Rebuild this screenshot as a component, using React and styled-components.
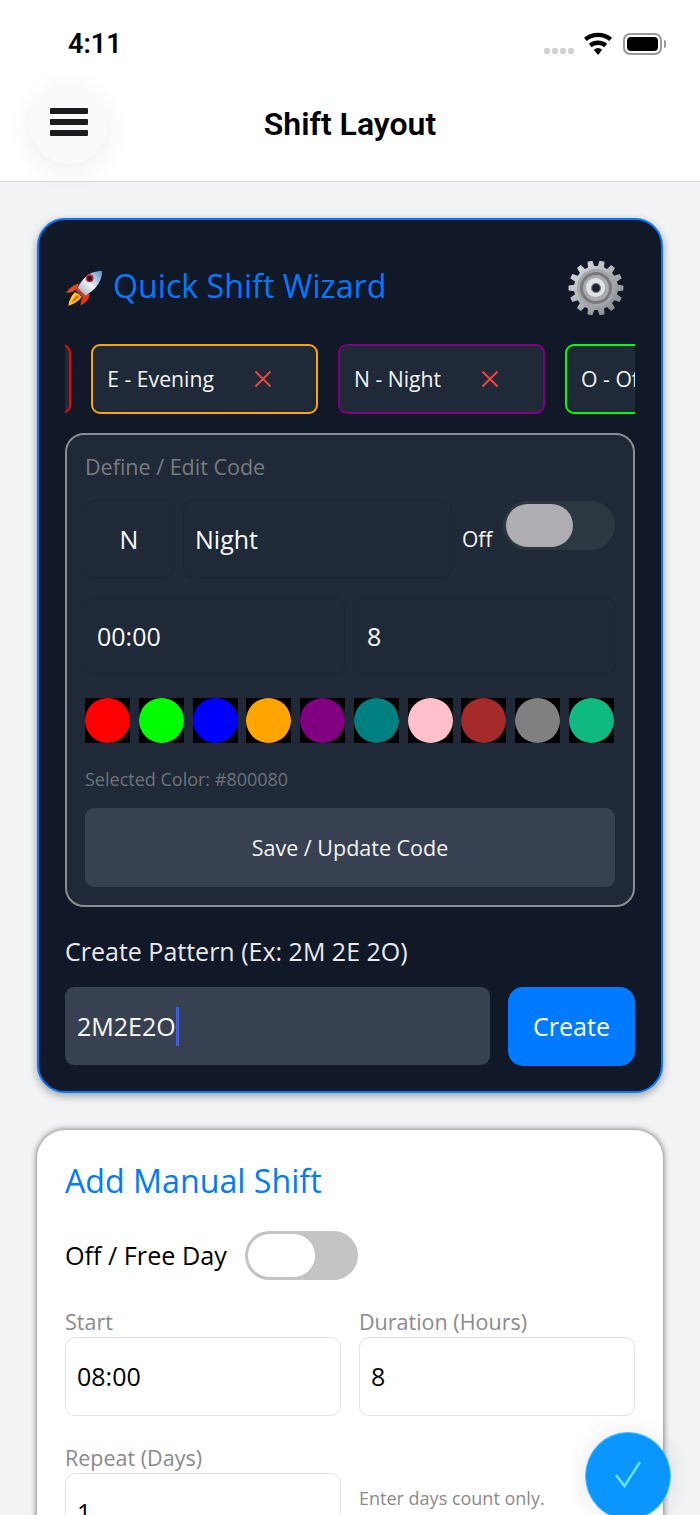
import { useLayoutEffect, useRef } from "react";
import styled, { createGlobalStyle } from "styled-components";

const chips = [
  { id: "M", name: "Morning", color: "#ff0000" },
  { id: "E", name: "Evening", color: "#ffa500" },
  { id: "N", name: "Night", color: "#800080" },
  { id: "O", name: "Off", color: "#00ff00" },
];

const swatches = [
  "#ff0000",
  "#00ff00",
  "#0000ff",
  "#ffa500",
  "#800080",
  "#008080",
  "#ffc0cb",
  "#a52a2a",
  "#808080",
  "#10b981",
];

// 14 teeth around the centre, outline is easier to compute than to write out
function gearPath() {
  const teeth = 14;
  const points = [];
  for (let i = 0; i < teeth; i++) {
    const a = (i / teeth) * Math.PI * 2;
    const step = (Math.PI * 2) / teeth;
    [
      [-0.33, 22],
      [-0.2, 27.5],
      [0.2, 27.5],
      [0.33, 22],
    ].forEach(([offset, r]) => {
      const t = a + offset * step;
      points.push(`${(r * Math.cos(t)).toFixed(2)} ${(r * Math.sin(t)).toFixed(2)}`);
    });
  }
  return "M" + points.join("L") + "Z";
}

export default function App() {
  const chipsRef = useRef(null);

  useLayoutEffect(() => {
    const row = chipsRef.current;
    const second = row.children[1];
    row.scrollLeft = second.offsetLeft - row.offsetLeft - 26;
  }, []);

  return (
    <Page>
      <GlobalStyle />
      <TopArea>
        <StatusBar>
          <Clock>4:11</Clock>
          <StatusIcons>
            <SignalDots>
              <i />
              <i />
              <i />
              <i />
            </SignalDots>
            <svg width="30" height="24" viewBox="0 0 30 24">
              <path
                d="M15 23l-4.2-5.2a6.6 6.6 0 0 1 8.4 0zM8.6 15.2 5.9 11.8a14.4 14.4 0 0 1 18.2 0l-2.7 3.4a10 10 0 0 0-12.8 0zM3.7 9.1 1 5.7a22 22 0 0 1 28 0l-2.7 3.4a17.8 17.8 0 0 0-22.6 0z"
                fill="#000"
              />
            </svg>
            <Battery>
              <BatteryFill />
            </Battery>
          </StatusIcons>
        </StatusBar>
        <NavBar>
          <MenuButton>
            <MenuLine />
            <MenuLine />
            <MenuLine />
          </MenuButton>
          <NavTitle>Shift Layout</NavTitle>
        </NavBar>
      </TopArea>

      <Content>
        <WizardCard>
          <WizardHeader>
            <WizardTitle>
              <svg width="38" height="38" viewBox="30 24 114 114">
                <defs>
                  <linearGradient id="hull" x1="0" x2="1" y1="1" y2="0">
                    <stop offset="0" stopColor="#8b98a8" />
                    <stop offset="0.5" stopColor="#eef2f6" />
                    <stop offset="1" stopColor="#5d8fc4" />
                  </linearGradient>
                </defs>
                <path d="M72 68C58 70 42 80 33 96L52 93 66 84Z" fill="#e8451f" />
                <path d="M104 98C104 112 92 126 76 133L80 113 90 102Z" fill="#e8321f" />
                <path d="M60 94C48 104 42 120 40 134 54 130 70 122 80 108L70 98Z" fill="#ffc81f" />
                <path d="M64 102C56 110 52 118 50 125 58 121 68 114 74 106Z" fill="#f2701f" />
                <path d="M141 30C120 30 100 36 85 55 76 66 68 78 64 90L84 108C96 102 108 94 120 82 134 66 142 48 141 30Z" fill="url(#hull)" />
                <path d="M64 90 68 80 92 104 84 108Z" fill="#c33a28" />
                <circle cx="104" cy="52" r="10" fill="#1a1d2c" stroke="#d7263d" strokeWidth="4" />
              </svg>
              <TitleText>Quick Shift Wizard</TitleText>
            </WizardTitle>
            <svg width="56" height="56" viewBox="-28 -28 56 56" style={{ marginRight: 11 }}>
              <defs>
                <linearGradient id="gear" x1="0" x2="1" y1="0" y2="1">
                  <stop offset="0" stopColor="#dfe3e7" />
                  <stop offset="1" stopColor="#7f8184" />
                </linearGradient>
              </defs>
              <path d={gearPath()} fill="url(#gear)" />
              <circle r="19" fill="#a4a6a9" />
              <circle r="16" fill="#77797c" />
              <circle r="13" fill="#a9abae" />
              <circle r="9.5" cx="-0.5" cy="-0.5" fill="#e0e3e6" />
              <circle r="4.5" fill="#1d2230" stroke="#7b7e82" strokeWidth="1.2" />
            </svg>
          </WizardHeader>

          <ChipRow ref={chipsRef}>
            {chips.map((chip) => (
              <Chip key={chip.id} $color={chip.color}>
                <ChipText>
                  {chip.id} - {chip.name}
                </ChipText>
                <svg width="18" height="18" viewBox="0 0 18 18">
                  <path d="M1.5 1.5 16.5 16.5M16.5 1.5 1.5 16.5" stroke="#ef4444" strokeWidth="2" />
                </svg>
              </Chip>
            ))}
          </ChipRow>

          <CodePanel>
            <PanelLabel>Define / Edit Code</PanelLabel>
            <CodeRow>
              <DarkField $width="88px" $center>
                N
              </DarkField>
              <DarkField $width="269px">Night</DarkField>
              <OffGroup>
                <OffLabel>Off</OffLabel>
                <DarkToggle>
                  <DarkThumb />
                </DarkToggle>
              </OffGroup>
            </CodeRow>
            <TimeRow>
              <DarkField>00:00</DarkField>
              <DarkField>8</DarkField>
            </TimeRow>
            <SwatchRow>
              {swatches.map((color) => (
                <Swatch key={color}>
                  <SwatchDot $color={color} />
                </Swatch>
              ))}
            </SwatchRow>
            <SelectedColor>Selected Color: #800080</SelectedColor>
            <SaveButton>Save / Update Code</SaveButton>
          </CodePanel>

          <PatternLabel>Create Pattern (Ex: 2M 2E 2O)</PatternLabel>
          <PatternRow>
            <PatternInput>
              2M2E2O
              <Caret />
            </PatternInput>
            <CreateButton>Create</CreateButton>
          </PatternRow>
        </WizardCard>

        <ManualCard>
          <ManualTitle>Add Manual Shift</ManualTitle>
          <FreeDayRow>
            <FreeDayLabel>Off / Free Day</FreeDayLabel>
            <LightToggle>
              <LightThumb />
            </LightToggle>
          </FreeDayRow>
          <FieldGrid>
            <div>
              <FieldLabel>Start</FieldLabel>
              <LightField>08:00</LightField>
            </div>
            <div>
              <FieldLabel>Duration (Hours)</FieldLabel>
              <LightField>8</LightField>
            </div>
            <div>
              <FieldLabel>Repeat (Days)</FieldLabel>
              <LightField>1</LightField>
            </div>
            <HintCell>Enter days count only.</HintCell>
          </FieldGrid>
        </ManualCard>
      </Content>

      <Fab>
        <svg width="28" height="28" viewBox="0 0 28 28">
          <path d="M2 15 10.5 26 26 2" fill="none" stroke="#66e0ff" strokeWidth="2.6" />
        </svg>
      </Fab>
    </Page>
  );
}

const GlobalStyle = createGlobalStyle`
  * {
    box-sizing: border-box;
  }
  html, body {
    margin: 0;
    padding: 0;
    background: #f2f3f5;
  }
`;

const Page = styled.div`
  position: relative;
  width: 700px;
  height: 1515px;
  overflow: hidden;
  background: #f2f3f5;
  font-family: "Open Sans", "Liberation Sans", sans-serif;
`;

const TopArea = styled.header`
  height: 182px;
  background: #fff;
  border-bottom: 1px solid #d9d9d9;
`;

const StatusBar = styled.div`
  height: 84px;
  padding: 4px 38px 0 68px;
  display: flex;
  align-items: center;
  justify-content: space-between;
`;

const Clock = styled.div`
  font-family: Roboto, "Liberation Sans", sans-serif;
  font-size: 27px;
  font-weight: 600;
  color: #000;
`;

const StatusIcons = styled.div`
  display: flex;
  align-items: center;
  gap: 9px;
`;

const SignalDots = styled.div`
  display: flex;
  gap: 2px;
  margin-top: 14px;

  i {
    display: block;
    width: 6px;
    height: 6px;
    border-radius: 2px;
    background: #d2d2d2;
  }
`;

const Battery = styled.div`
  width: 39px;
  height: 22px;
  margin-left: 1px;
  border: 2px solid #9a9a9a;
  border-radius: 7px;
  padding: 2px;
  position: relative;

  &::after {
    content: "";
    position: absolute;
    right: -6px;
    top: 5px;
    width: 2px;
    height: 8px;
    background: #9a9a9a;
    border-radius: 0 2px 2px 0;
  }
`;

const BatteryFill = styled.div`
  width: 100%;
  height: 100%;
  background: #000;
  border-radius: 4px;
`;

const NavBar = styled.div`
  display: grid;
  grid-template-columns: 79px 1fr 79px;
  align-items: center;
  padding: 0 29px;
`;

const MenuButton = styled.div`
  width: 79px;
  height: 80px;
  padding-bottom: 4px;
  border-radius: 50%;
  background: #fafafa;
  box-shadow: 0 6px 28px rgba(0, 0, 0, 0.07);
  display: flex;
  flex-direction: column;
  align-items: center;
  justify-content: center;
  gap: 5px;
`;

const MenuLine = styled.div`
  width: 38px;
  height: 6px;
  background: #1c1c1e;
  border-radius: 1px;
`;

const NavTitle = styled.h1`
  margin: 0;
  text-align: center;
  font-family: Roboto, "Liberation Sans", sans-serif;
  font-size: 32px;
  font-weight: 600;
  color: #000;
`;

const Content = styled.main`
  padding: 36px 37px 0;
  display: flex;
  flex-direction: column;
  gap: 37px;
`;

const WizardCard = styled.section`
  height: 875px;
  padding: 38px 26px 26px;
  background: #111827;
  border: 2px solid #007aff;
  border-radius: 28px;
  box-shadow: 0 3px 9px rgba(0, 0, 0, 0.35);
`;

const WizardHeader = styled.div`
  height: 60px;
  display: flex;
  align-items: center;
  justify-content: space-between;
`;

const WizardTitle = styled.h2`
  margin: 0;
  display: flex;
  align-items: center;
  gap: 10px;
  font-size: 32.2px;
  font-weight: 400;
  color: #007aff;
`;

const TitleText = styled.span`
  margin-top: -6px;
`;

const ChipRow = styled.div`
  margin-top: 26px;
  height: 70px;
  display: flex;
  gap: 20px;
  overflow: hidden;
`;

const Chip = styled.div`
  flex-shrink: 0;
  height: 70px;
  padding: 0 44px 0 14px;
  display: flex;
  align-items: center;
  gap: 40px;
  background: #1f2937;
  border: 2px solid ${(props) => props.$color};
  border-radius: 9px;
  font-size: 21.2px;
  color: #f3f4f6;
`;

const ChipText = styled.span`
  margin-top: -2px;
`;

const CodePanel = styled.div`
  margin-top: 19px;
  height: 474px;
  padding: 17px 18px 18px;
  background: #1f2937;
  border: 2px solid #8b8f94;
  border-radius: 19px;
`;

const PanelLabel = styled.div`
  height: 30px;
  line-height: 30px;
  font-size: 21.5px;
  color: #7a7c7f;
`;

const CodeRow = styled.div`
  margin-top: 18px;
  display: flex;
  gap: 10px;
`;

const DarkField = styled.div`
  flex: ${(props) => (props.$width ? `0 0 ${props.$width}` : "1")};
  height: 78px;
  padding: 0 11px;
  display: flex;
  align-items: center;
  justify-content: ${(props) => (props.$center ? "center" : "flex-start")};
  border: 1px solid #1c2532;
  border-radius: 10px;
  font-size: 25px;
  color: #f9fafb;
`;

const OffGroup = styled.div`
  flex: 1;
  display: flex;
  align-items: center;
  justify-content: space-between;
`;

const OffLabel = styled.span`
  font-size: 21px;
  color: #f3f4f6;
`;

const DarkToggle = styled.div`
  align-self: flex-start;
  margin-top: 1px;
  width: 112px;
  height: 49px;
  padding: 3px;
  background: #2d3742;
  border-radius: 25px;
`;

const DarkThumb = styled.div`
  width: 67px;
  height: 43px;
  background: #aeaeb2;
  border-radius: 22px;
`;

const TimeRow = styled.div`
  margin-top: 19px;
  display: grid;
  grid-template-columns: 1fr 1fr;
  gap: 10px;
`;

const SwatchRow = styled.div`
  margin-top: 23px;
  padding-right: 1px;
  display: flex;
  justify-content: space-between;
`;

const Swatch = styled.div`
  width: 45px;
  height: 45px;
  background: #000;
`;

const SwatchDot = styled.div`
  width: 100%;
  height: 100%;
  border-radius: 50%;
  background: ${(props) => props.$color};
`;

const SelectedColor = styled.div`
  margin-top: 24px;
  height: 24px;
  line-height: 24px;
  font-size: 18px;
  color: #6f7378;
`;

const SaveButton = styled.div`
  margin-top: 17px;
  height: 79px;
  display: flex;
  align-items: center;
  justify-content: center;
  background: #374151;
  border-radius: 9px;
  font-size: 21.5px;
  color: #f3f4f6;
`;

const PatternLabel = styled.div`
  margin-top: 27px;
  height: 34px;
  line-height: 34px;
  font-size: 25px;
  color: #e8eaed;
`;

const PatternRow = styled.div`
  margin-top: 19px;
  display: flex;
  justify-content: space-between;
`;

const PatternInput = styled.div`
  width: 425px;
  height: 78px;
  padding: 0 12px;
  display: flex;
  align-items: center;
  background: #374151;
  border-radius: 9px;
  font-size: 25px;
  color: #f9fafb;
`;

const Caret = styled.span`
  width: 3px;
  height: 39px;
  background: #3f5fe0;
`;

const CreateButton = styled.div`
  width: 127px;
  height: 79px;
  padding-bottom: 2px;
  display: flex;
  align-items: center;
  justify-content: center;
  background: #007aff;
  border-radius: 15px;
  font-size: 25px;
  color: #fff;
`;

const ManualCard = styled.section`
  padding: 29px 28px 40px;
  background: #fff;
  border-radius: 28px;
  box-shadow: 0 0 6px rgba(0, 0, 0, 0.6);
`;

const ManualTitle = styled.h2`
  margin: 0;
  height: 44px;
  line-height: 44px;
  font-size: 32.2px;
  font-weight: 400;
  color: #007aff;
`;

const FreeDayRow = styled.div`
  margin-top: 28px;
  display: flex;
  align-items: center;
  gap: 18px;
  font-size: 25.2px;
  color: #000;
`;

const FreeDayLabel = styled.span`
  margin-top: -2px;
`;

const LightToggle = styled.div`
  width: 113px;
  height: 49px;
  padding: 3px;
  background: #c4c4c6;
  border-radius: 25px;
`;

const LightThumb = styled.div`
  width: 67px;
  height: 43px;
  background: #fff;
  border-radius: 22px;
`;

const FieldGrid = styled.div`
  margin-top: 27px;
  display: grid;
  grid-template-columns: 276px 276px;
  column-gap: 18px;
  row-gap: 27px;
`;

const FieldLabel = styled.div`
  height: 30px;
  line-height: 30px;
  font-size: 21.5px;
  color: #8a8a8e;
`;

const LightField = styled.div`
  height: 79px;
  padding: 0 11px 2px;
  display: flex;
  align-items: center;
  border: 1px solid #e2e2e4;
  border-radius: 10px;
  font-size: 25px;
  color: #000;
`;

const HintCell = styled.div`
  padding-top: 43px;
  font-size: 18px;
  color: #8a8a8e;
`;

const Fab = styled.div`
  position: absolute;
  left: 585px;
  top: 1432px;
  width: 86px;
  height: 88px;
  display: flex;
  align-items: center;
  justify-content: center;
  padding-bottom: 5px;
  background: #0a95ff;
  border: 1px solid #4fc3ff;
  border-radius: 50%;
  box-shadow: 0 0 24px rgba(0, 0, 0, 0.1);
`;
